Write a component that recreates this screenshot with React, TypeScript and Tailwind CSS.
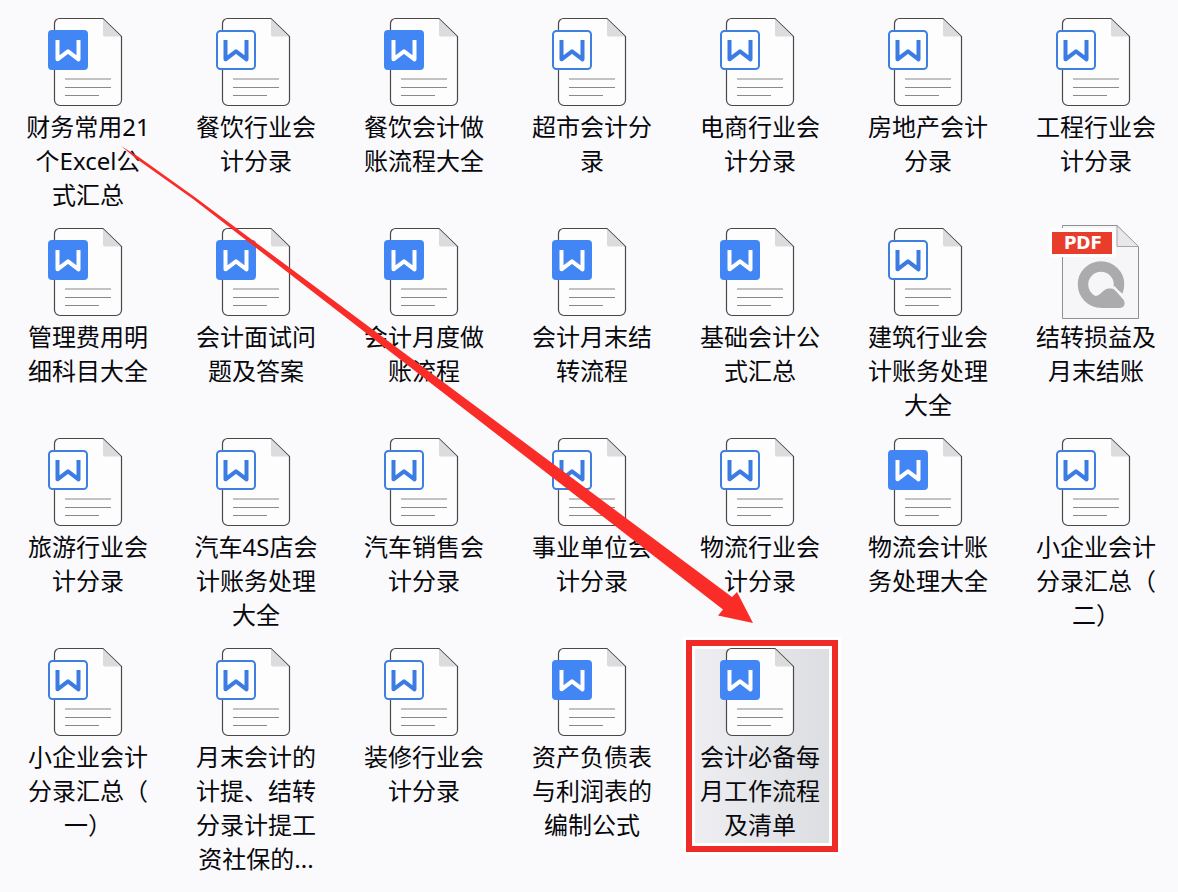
import { Fragment } from 'react';

type FileKind = 'word' | 'wordOutline' | 'pdf';

interface FileItem {
  kind: FileKind;
  lines: string[];
  selected?: boolean;
}

const files: FileItem[] = [
  { kind: 'word', lines: ['财务常用21', '个Excel公', '式汇总'] },
  { kind: 'wordOutline', lines: ['餐饮行业会', '计分录'] },
  { kind: 'word', lines: ['餐饮会计做', '账流程大全'] },
  { kind: 'wordOutline', lines: ['超市会计分', '录'] },
  { kind: 'wordOutline', lines: ['电商行业会', '计分录'] },
  { kind: 'wordOutline', lines: ['房地产会计', '分录'] },
  { kind: 'wordOutline', lines: ['工程行业会', '计分录'] },

  { kind: 'word', lines: ['管理费用明', '细科目大全'] },
  { kind: 'word', lines: ['会计面试问', '题及答案'] },
  { kind: 'word', lines: ['会计月度做', '账流程'] },
  { kind: 'word', lines: ['会计月末结', '转流程'] },
  { kind: 'word', lines: ['基础会计公', '式汇总'] },
  { kind: 'wordOutline', lines: ['建筑行业会', '计账务处理', '大全'] },
  { kind: 'pdf', lines: ['结转损益及', '月末结账'] },

  { kind: 'wordOutline', lines: ['旅游行业会', '计分录'] },
  { kind: 'wordOutline', lines: ['汽车4S店会', '计账务处理', '大全'] },
  { kind: 'wordOutline', lines: ['汽车销售会', '计分录'] },
  { kind: 'wordOutline', lines: ['事业单位会', '计分录'] },
  { kind: 'wordOutline', lines: ['物流行业会', '计分录'] },
  { kind: 'word', lines: ['物流会计账', '务处理大全'] },
  { kind: 'wordOutline', lines: ['小企业会计', '分录汇总（', '二）'] },

  { kind: 'wordOutline', lines: ['小企业会计', '分录汇总（', '一）'] },
  { kind: 'wordOutline', lines: ['月末会计的', '计提、结转', '分录计提工', '资社保的...'] },
  { kind: 'wordOutline', lines: ['装修行业会', '计分录'] },
  { kind: 'word', lines: ['资产负债表', '与利润表的', '编制公式'] },
  { kind: 'word', lines: ['会计必备每', '月工作流程', '及清单'], selected: true },
];

function WordIcon({ outline }: { outline: boolean }) {
  return (
    <svg viewBox="0 0 88 96" className="h-24 w-22" aria-hidden="true">
      <path
        d="M15.5 4.5H59L77.5 22.5V86a5.5 5.5 0 0 1-5.5 5.5H16a5.5 5.5 0 0 1-5.5-5.5V9.5a5 5 0 0 1 5-5Z"
        fill="#fdfdfd"
        stroke="#4b4647"
        strokeWidth="1.2"
      />
      <path d="M59 5V20.5a2 2 0 0 0 2 2H77Z" fill="#dcdcde" />
      <path d="M21 65H67M21 73.5H67M21 81.5H55" stroke="#8c8788" strokeWidth="1" />
      {outline ? (
        <rect x="5" y="17" width="38" height="38" rx="3.5" fill="#fdfeff" stroke="#3f7fe0" strokeWidth="2" />
      ) : (
        <rect x="4" y="16" width="40" height="40" rx="4" fill="#4285f4" />
      )}
      <path
        d="M13.5 26V45.3L24 37.3L34.5 45.3V26"
        fill="none"
        stroke={outline ? '#3b7be2' : '#ffffff'}
        strokeWidth="4"
        strokeLinejoin="round"
      />
    </svg>
  );
}

function PdfIcon() {
  return (
    <svg viewBox="0 0 88 96" className="h-24 w-22 overflow-visible" aria-hidden="true">
      <path d="M10.5 1.5H65L86.5 22.5V94.5H10.5Z" fill="#f6f6f8" stroke="#8f8f91" />
      <path d="M65 1.5V22.5H86.5Z" fill="#e8e8ea" stroke="#a5a5a7" />
      <rect x="-3" y="4" width="67" height="29" rx="4" fill="#ffffff" />
      <rect x="0" y="8" width="60" height="22" fill="#e93d2c" />
      <text
        x="31"
        y="25"
        textAnchor="middle"
        className="fill-white font-['DejaVu_Sans'] text-[17px] font-bold"
      >
        PDF
      </text>
      <circle cx="49" cy="60.5" r="18" fill="none" stroke="#ababad" strokeWidth="10.5" />
      <path d="M61 63C65 69 69 71 75 75" fill="none" stroke="#f6f6f8" strokeWidth="4" />
      <path d="M42 72C48 73 51 65 56 64.500H60C63 65 67 71 71 75C74 79 73 84 67 84H49Z" fill="#ababad" />
    </svg>
  );
}

function FileTile({ file }: { file: FileItem }) {
  return (
    <li className="relative">
      {file.selected && (
        <div className="absolute top-[10px] right-[6px] left-[10px] h-[212px] border-6 border-[#ee2b27] bg-white p-[3px] outline-3 outline-white">
          <div className="h-full bg-linear-to-r from-[#eeeef2] to-[#dcdee2]" />
        </div>
      )}
      <button type="button" className="relative flex w-full flex-col items-center pt-3.5">
        {file.kind === 'pdf' ? <PdfIcon /> : <WordIcon outline={file.kind === 'wordOutline'} />}
        <span className="text-center text-2xl leading-[34px] whitespace-nowrap text-[#08080c]">
          {file.lines.map((line, i) => (
            <Fragment key={i}>
              {i > 0 && <br />}
              {line}
            </Fragment>
          ))}
        </span>
      </button>
    </li>
  );
}

// red pointer from the first file down to the selected one
function Arrow() {
  return (
    <svg
      viewBox="0 0 760 640"
      className="pointer-events-none absolute top-0 left-0 h-[640px] w-[760px]"
      aria-hidden="true"
    >
      <path
        d="M117 146L134 156.500L190 196.500L728 597L733 592L749 623L714 615.500L719 609.500L189 199L132 158.500Z"
        fill="#f92c28"
      />
    </svg>
  );
}

export default function App() {
  return (
    <main className="min-h-screen overflow-hidden bg-[#fafafc] font-['Noto_Sans','Noto_Sans_CJK_SC',sans-serif]">
      <div className="relative -mr-0.5 ml-1 pb-10">
        <ul className="grid auto-rows-[210px] grid-cols-7">
          {files.map((file, i) => (
            <FileTile key={i} file={file} />
          ))}
        </ul>
        <Arrow />
      </div>
    </main>
  );
}
